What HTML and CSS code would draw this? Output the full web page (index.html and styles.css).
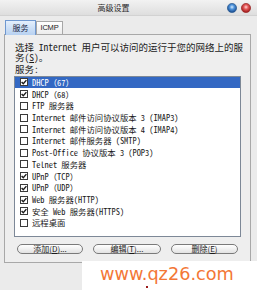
FILE: index.html
```html
<!DOCTYPE html>
<html lang="zh-CN">
<head>
<meta charset="utf-8">
<title>高级设置</title>
<link rel="stylesheet" href="styles.css">
</head>
<body>
<div class="window">
  <div class="titlebar">
    <span class="title">高级设置</span>
    <div class="tbtns">
      <svg class="tbtn" viewBox="0 0 10 10" width="10" height="10">
        <defs>
          <radialGradient id="gb" cx="50%" cy="40%" r="55%">
            <stop offset="0%" stop-color="#d6ecff"/>
            <stop offset="45%" stop-color="#4d92da"/>
            <stop offset="100%" stop-color="#1c4f92"/>
          </radialGradient>
          <radialGradient id="gr" cx="50%" cy="40%" r="55%">
            <stop offset="0%" stop-color="#ffd6d6"/>
            <stop offset="45%" stop-color="#e25656"/>
            <stop offset="100%" stop-color="#a11c1c"/>
          </radialGradient>
        </defs>
        <circle cx="5" cy="5" r="4.6" fill="url(#gb)" stroke="#2d5b92" stroke-width="0.7"/>
      </svg>
      <svg class="tbtn" viewBox="0 0 10 10" width="10" height="10">
        <circle cx="5" cy="5" r="4.6" fill="url(#gr)" stroke="#9a2a2a" stroke-width="0.7"/>
      </svg>
    </div>
  </div>
  <div class="body">
    <div class="tabs">
      <div class="tab active">服务</div>
      <div class="tab">ICMP</div>
    </div>
    <div class="panel">
      <p class="desc mono">选择 Internet 用户可以访问的运行于您的网络上的服<br>务(<u>S</u>)。</p>
      <div class="label mono">服务:</div>
      <div class="list mono">
        <div class="row sel"><svg class="cb" viewBox="0 0 8 8"><rect x="0.5" y="0.5" width="7" height="7"/><path d="M1.6 4 L3.3 5.8 L6.4 2.1"/></svg>DHCP（67）</div>
        <div class="row"><svg class="cb" viewBox="0 0 8 8"><rect x="0.5" y="0.5" width="7" height="7"/><path d="M1.6 4 L3.3 5.8 L6.4 2.1"/></svg>DHCP（68）</div>
        <div class="row"><svg class="cb" viewBox="0 0 8 8"><rect x="0.5" y="0.5" width="7" height="7"/></svg>FTP 服务器</div>
        <div class="row"><svg class="cb" viewBox="0 0 8 8"><rect x="0.5" y="0.5" width="7" height="7"/></svg>Internet 邮件访问协议版本 3 (IMAP3)</div>
        <div class="row"><svg class="cb" viewBox="0 0 8 8"><rect x="0.5" y="0.5" width="7" height="7"/></svg>Internet 邮件访问协议版本 4 (IMAP4)</div>
        <div class="row"><svg class="cb" viewBox="0 0 8 8"><rect x="0.5" y="0.5" width="7" height="7"/></svg>Internet 邮件服务器 (SMTP)</div>
        <div class="row"><svg class="cb" viewBox="0 0 8 8"><rect x="0.5" y="0.5" width="7" height="7"/></svg>Post-Office 协议版本 3 (POP3)</div>
        <div class="row"><svg class="cb" viewBox="0 0 8 8"><rect x="0.5" y="0.5" width="7" height="7"/></svg>Telnet 服务器</div>
        <div class="row"><svg class="cb" viewBox="0 0 8 8"><rect x="0.5" y="0.5" width="7" height="7"/><path d="M1.6 4 L3.3 5.8 L6.4 2.1"/></svg>UPnP（TCP）</div>
        <div class="row"><svg class="cb" viewBox="0 0 8 8"><rect x="0.5" y="0.5" width="7" height="7"/><path d="M1.6 4 L3.3 5.8 L6.4 2.1"/></svg>UPnP（UDP）</div>
        <div class="row"><svg class="cb" viewBox="0 0 8 8"><rect x="0.5" y="0.5" width="7" height="7"/><path d="M1.6 4 L3.3 5.8 L6.4 2.1"/></svg>Web 服务器(HTTP)</div>
        <div class="row"><svg class="cb" viewBox="0 0 8 8"><rect x="0.5" y="0.5" width="7" height="7"/><path d="M1.6 4 L3.3 5.8 L6.4 2.1"/></svg>安全 Web 服务器(HTTPS)</div>
        <div class="row"><svg class="cb" viewBox="0 0 8 8"><rect x="0.5" y="0.5" width="7" height="7"/></svg>远程桌面</div>
      </div>
      <div class="buttons">
        <div class="btn b1">添加(<u>D</u>)...</div>
        <div class="btn b2">编辑(<u>T</u>)...</div>
        <div class="btn b3">删除(<u>E</u>)</div>
      </div>
    </div>
  </div>
  <div class="watermark">www.qz26.com<i class="dot"></i></div>
</div>
</body>
</html>
```

FILE: styles.css
```css
* { box-sizing: border-box; margin: 0; padding: 0; }
html, body { width: 257px; height: 290px; overflow: hidden; }
body { background: #ebebeb; font-family: "Noto Sans CJK SC", sans-serif; color: #1a1a1a; }

.window { position: relative; width: 257px; height: 290px; background: #ebebeb; }

.titlebar {
  height: 16px;
  display: flex;
  align-items: center;
  background: linear-gradient(#f2f2f2, #dedede);
  border-bottom: 1px solid #d2d2d2;
}
.title { flex: 1; text-align: center; font-size: 8px; line-height: 15px; color: #2a2a2a; }
.tbtns { display: flex; gap: 3.6px; padding-right: 6.3px; }
.tbtn { width: 10px; height: 10px; display: block; }

.body { padding: 3.5px 6.5px 0 4px; }

.tabs { display: flex; height: 14px; padding-left: 1px; align-items: flex-end; position: relative; z-index: 1; }
.tab {
  height: 13px;
  font-size: 7.5px;
  line-height: 12px;
  text-align: center;
  border: 1px solid #a7a7a7;
  border-bottom: none;
  background: linear-gradient(#ffffff, #ececec);
  font-family: "Liberation Sans", sans-serif;
  letter-spacing: -0.2px;
  color: #222;
  width: 27px;
}
.tab.active {
  height: 14.5px;
  width: 31px;
  margin-bottom: -1px;
  font-family: "Noto Sans CJK SC", sans-serif;
  font-size: 8px;
  letter-spacing: 0;
  line-height: 13px;
  border-color: #6f98d0;
  background: linear-gradient(#e4effc, #b7d1f1);
  color: #1b2a44;
}

.panel {
  border: 1px solid #a8a8a8;
  background: #eeeeee;
  padding: 7px 8.5px 8px 10px;
}

.mono { font-family: "Noto Sans Mono CJK SC", "Liberation Mono", "Noto Sans CJK SC", monospace; }

.desc { font-size: 9.5px; line-height: 10px; white-space: nowrap; margin-bottom: 2px; }
.label { font-size: 9.5px; line-height: 10px; margin-bottom: 2px; }

.list {
  margin-left: -1px;
  width: 227px;
  height: 161.5px;
  border: 1px solid #7d8897;
  background: #fff;
  font-size: 8.4px;
  overflow: hidden;
}
.row {
  height: 11.73px;
  display: flex;
  align-items: center;
  gap: 4px;
  padding-left: 5px;
  white-space: nowrap;
  line-height: 11px;
  color: #1a1a1a;
}
.row.sel { background: #3368c3; color: #fff; }
.cb { width: 8px; height: 8px; flex: none; }
.cb rect { fill: #fff; stroke: #3a3a3a; stroke-width: 1; }
.cb path { fill: none; stroke: #1c1c1c; stroke-width: 1.4; }

.buttons { display: flex; gap: 10px; margin-top: 6.5px; padding-left: 2px; }
.btn {
  height: 10px;
  border: 1px solid #7a7a7a;
  border-radius: 5px;
  background: linear-gradient(#ffffff, #e2e2e2);
  font-size: 8px;
  line-height: 8px;
  text-align: center;
  color: #1a1a1a;
}
.b1 { width: 66px; }
.b2 { width: 68px; }
.b3 { width: 67px; }

.watermark {
  position: absolute;
  left: 82px;
  top: 261px;
  right: 0;
  bottom: 0;
  background: #fff;
  padding: 2.9px 0 0 18px;
  font-family: "DejaVu Sans", sans-serif;
  font-size: 17.7px;
  line-height: 20px;
  color: #f37736;
}
.dot { position: absolute; left: 64px; top: 25px; width: 2px; height: 2px; background: #9b1b1b; }
```
